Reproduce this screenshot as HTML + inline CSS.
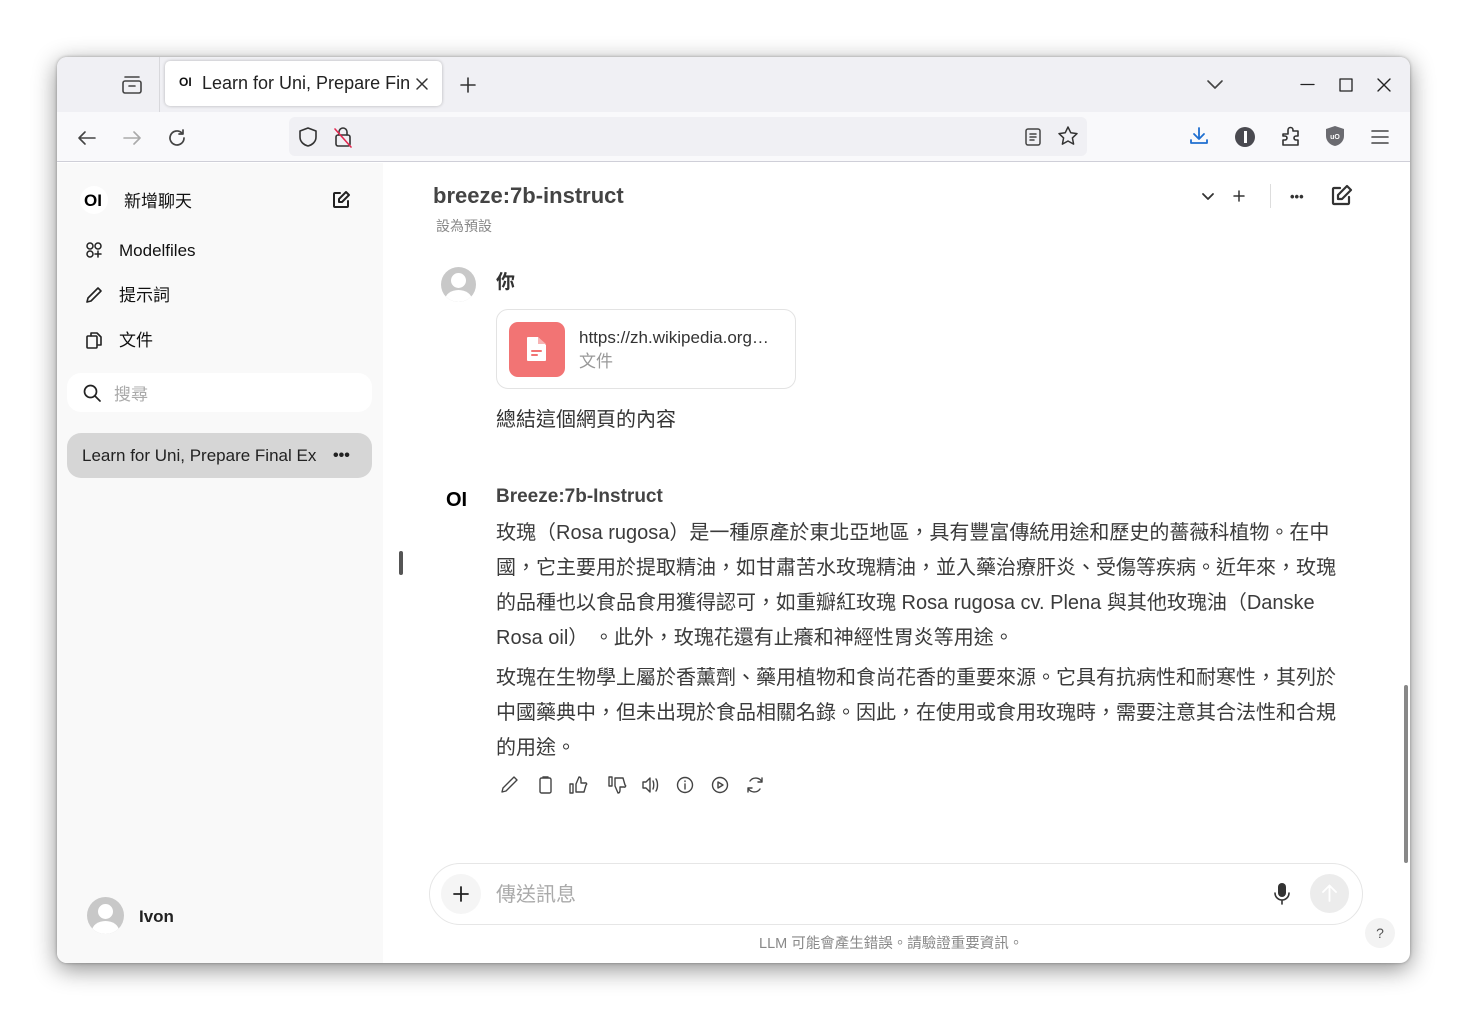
<!DOCTYPE html>
<html><head><meta charset="utf-8"><style>
*{margin:0;padding:0;box-sizing:border-box}
body{width:1465px;height:1018px;background:#fff;font-family:"Liberation Sans","Noto Sans CJK TC",sans-serif;position:relative;overflow:hidden;color:#333}
.a{position:absolute}
#win{left:57px;top:57px;width:1353px;height:906px;border-radius:10px;overflow:hidden;box-shadow:0 6px 24px rgba(0,0,0,.45),0 0 3px rgba(0,0,0,.3);background:#fff}
.t{white-space:nowrap}
svg{position:absolute;fill:none;stroke-linecap:round;stroke-linejoin:round}
.line{font-size:20px;color:#3b3b3b;white-space:nowrap;left:439px}
</style></head><body>
<div id="win" class="a">
 <div class="a" style="left:0;top:0;width:1353px;height:55px;background:#f0f0f4"></div>
 <div class="a" style="left:102px;top:0;width:1px;height:55px;background:#d8d8dc"></div>
 <svg style="left:64px;top:17px" width="22" height="22" viewBox="0 0 22 22" stroke="#444" stroke-width="1.6"><rect x="2" y="7" width="18" height="12" rx="2"/><path d="M4 3h14M8 12h6"/></svg>
 <div class="a" style="left:108px;top:4px;width:277px;height:45px;background:#fff;border-radius:5px;box-shadow:0 0 3px rgba(0,0,0,.25)"></div>
 <div class="a t" style="left:122px;top:18px;font-size:12px;font-weight:bold;color:#111">OI</div>
 <div class="a t" style="left:145px;top:16px;font-size:18px;color:#222;width:208px;overflow:hidden">Learn for Uni, Prepare Fina</div>
 <svg style="left:358px;top:20px" width="14" height="14" viewBox="0 0 14 14" stroke="#333" stroke-width="1.5"><path d="M2 2l10 10M12 2L2 12"/></svg>
 <svg style="left:402px;top:19px" width="18" height="18" viewBox="0 0 18 18" stroke="#333" stroke-width="1.6"><path d="M9 2v14M2 9h14"/></svg>
 <svg style="left:1149px;top:20px" width="18" height="14" viewBox="0 0 18 14" stroke="#444" stroke-width="1.6"><path d="M2 4l7 7 7-7"/></svg>
 <svg style="left:1243px;top:20px" width="16" height="16" viewBox="0 0 16 16" stroke="#222" stroke-width="1.3"><path d="M1 7.5h13"/></svg>
 <svg style="left:1281px;top:20px" width="16" height="16" viewBox="0 0 16 16" stroke="#222" stroke-width="1.3"><rect x="2" y="2" width="12" height="12"/></svg>
 <svg style="left:1319px;top:20px" width="16" height="16" viewBox="0 0 16 16" stroke="#222" stroke-width="1.4"><path d="M2 2l12 12M14 2L2 14"/></svg>
 <div class="a" style="left:0;top:55px;width:1353px;height:50px;background:#f9f9fb;border-bottom:1px solid #cfcfd8"></div>
 <svg style="left:19px;top:70px" width="22" height="22" viewBox="0 0 22 22" stroke="#444" stroke-width="1.6"><path d="M19 11H3M9 5l-6 6 6 6"/></svg>
 <svg style="left:64px;top:70px" width="22" height="22" viewBox="0 0 22 22" stroke="#aaa" stroke-width="1.6"><path d="M3 11h16M13 5l6 6-6 6"/></svg>
 <svg style="left:109px;top:70px" width="22" height="22" viewBox="0 0 22 22" stroke="#444" stroke-width="1.7"><path d="M18 11a7 7 0 1 1-2.5-5.4M17 3v4h-4"/></svg>
 <div class="a" style="left:232px;top:60px;width:798px;height:39px;background:#f0f0f4;border-radius:6px"></div>
 <svg style="left:240px;top:69px" width="22" height="22" viewBox="0 0 22 22" stroke="#333" stroke-width="1.6"><path d="M11 2l8 3v6c0 5-4 8-8 9-4-1-8-4-8-9V5z"/></svg>
 <svg style="left:275px;top:68px" width="22" height="24" viewBox="0 0 22 24" stroke="#333" stroke-width="1.6"><rect x="4" y="10" width="14" height="11" rx="2"/><path d="M7 10V7a4 4 0 0 1 8 0v3"/><path d="M3 4l16 18" stroke="#e22850"/></svg>
 <svg style="left:966px;top:70px" width="20" height="20" viewBox="0 0 20 20" stroke="#444" stroke-width="1.5"><rect x="3" y="2" width="14" height="16" rx="2"/><path d="M7 7h6M7 10h6M7 13h4"/></svg>
 <svg style="left:1000px;top:68px" width="22" height="22" viewBox="0 0 22 22" stroke="#333" stroke-width="1.5"><path d="M11 2l2.8 5.8 6.2.8-4.6 4.3 1.2 6.2L11 16l-5.6 3.1 1.2-6.2L2 8.6l6.2-.8z"/></svg>
 <svg style="left:1131px;top:68px" width="22" height="22" viewBox="0 0 22 22" stroke="#1f6fd0" stroke-width="1.8"><path d="M11 3v11M6 9l5 5 5-5M3 15v3h16v-3"/></svg>
 <div class="a" style="left:1178px;top:70px;width:20px;height:20px;border-radius:50%;background:#4a4a50"></div>
 <div class="a" style="left:1186.5px;top:74px;width:3px;height:12px;background:#fff"></div>
 <svg style="left:1222px;top:67px" width="24" height="24" viewBox="0 0 24 24" stroke="#333" stroke-width="1.6"><path d="M4 10h5V6a2.5 2.5 0 0 1 5 0v1h5v5h-2a2 2 0 0 0 0 4h2v5H4v-5h2a2 2 0 0 0 0-4H4z"/></svg>
 <svg style="left:1267px;top:68px" width="22" height="22" viewBox="0 0 22 22"><path d="M11 1l9 3v7c0 5-4 9-9 10-5-1-9-5-9-10V4z" fill="#6b6b70"/><text x="11" y="14" font-size="7" fill="#fff" text-anchor="middle" font-family="Liberation Sans" font-weight="bold">uO</text></svg>
 <svg style="left:1312px;top:69px" width="22" height="22" viewBox="0 0 22 22" stroke="#444" stroke-width="1.6"><path d="M3 5h16M3 11h16M3 17h16"/></svg>

 <div class="a" style="left:0;top:106px;width:326px;height:800px;background:#f9f9f9"></div>
 <div class="a" style="left:23px;top:129px;width:28px;height:28px;border-radius:50%;background:#fff"></div>
 <div class="a t" style="left:27px;top:134px;font-size:17px;font-weight:bold;color:#000">OI</div>
 <div class="a t" style="left:67px;top:130px;font-size:17px;color:#111">新增聊天</div>
 <svg style="left:274px;top:133px" width="20" height="20" viewBox="0 0 20 20" stroke="#222" stroke-width="2"><path d="M9 3H4a1 1 0 0 0-1 1v12a1 1 0 0 0 1 1h12a1 1 0 0 0 1-1v-5"/><path d="M15 2l3 3-7 7H8V9z"/></svg>
 <svg style="left:28px;top:184px" width="18" height="18" viewBox="0 0 18 18" stroke="#222" stroke-width="1.5"><circle cx="5" cy="5" r="3"/><circle cx="13" cy="5" r="3"/><circle cx="5" cy="13" r="3"/><path d="M13 10v6M10 13h6"/></svg>
 <div class="a t" style="left:62px;top:184px;font-size:17px;color:#111">Modelfiles</div>
 <svg style="left:27px;top:228px" width="20" height="20" viewBox="0 0 20 20" stroke="#222" stroke-width="1.6"><path d="M14 3l3 3L7 16l-4 1 1-4z"/></svg>
 <div class="a t" style="left:62px;top:224px;font-size:17px;color:#111">提示詞</div>
 <svg style="left:27px;top:273px" width="20" height="20" viewBox="0 0 20 20" stroke="#222" stroke-width="1.6"><path d="M7 6V3h6l4 4v8h-3"/><rect x="3" y="6" width="10" height="12" rx="1"/></svg>
 <div class="a t" style="left:62px;top:269px;font-size:17px;color:#111">文件</div>
 <div class="a" style="left:10px;top:316px;width:305px;height:39px;background:#fff;border-radius:14px"></div>
 <svg style="left:25px;top:326px" width="20" height="20" viewBox="0 0 20 20" stroke="#222" stroke-width="1.7"><circle cx="8.5" cy="8.5" r="6"/><path d="M13 13l5 5"/></svg>
 <div class="a t" style="left:57px;top:323px;font-size:17px;color:#aaa">搜尋</div>
 <div class="a" style="left:10px;top:376px;width:305px;height:45px;background:#d6d6d6;border-radius:14px"></div>
 <div class="a t" style="left:25px;top:389px;font-size:17px;color:#222;width:236px;overflow:hidden">Learn for Uni, Prepare Final Ex</div>
 <div class="a t" style="left:276px;top:390px;font-size:16px;font-weight:bold;color:#222">•••</div>
 <div class="a" style="left:30px;top:840px;width:37px;height:37px;border-radius:50%;background:#c8c8c8;overflow:hidden"><div class="a" style="left:11px;top:7px;width:15px;height:15px;border-radius:50%;background:#fff"></div><div class="a" style="left:5px;top:24px;width:27px;height:20px;border-radius:50%;background:#fff"></div></div>
 <div class="a t" style="left:82px;top:850px;font-size:17px;font-weight:bold;color:#222">Ivon</div>

 <div class="a" style="left:342px;top:494px;width:4px;height:24px;border-radius:2px;background:#555"></div>
 <div class="a t" style="left:376px;top:126px;font-size:22px;font-weight:bold;color:#444">breeze:7b-instruct</div>
 <div class="a t" style="left:379px;top:159px;font-size:14px;color:#888">設為預設</div>
 <svg style="left:1143px;top:131px" width="16" height="16" viewBox="0 0 16 16" stroke="#333" stroke-width="1.8"><path d="M3 6l5 5 5-5"/></svg>
 <svg style="left:1174px;top:131px" width="16" height="16" viewBox="0 0 16 16" stroke="#333" stroke-width="1.5"><path d="M8 3v10M3 8h10"/></svg>
 <div class="a" style="left:1213px;top:127px;width:1px;height:24px;background:#ddd"></div>
 <div class="a t" style="left:1233px;top:132px;font-size:13px;font-weight:bold;color:#333">•••</div>
 <svg style="left:1272px;top:127px" width="24" height="24" viewBox="0 0 24 24" stroke="#333" stroke-width="2.2"><path d="M11 4H5a1 1 0 0 0-1 1v14a1 1 0 0 0 1 1h14a1 1 0 0 0 1-1v-6"/><path d="M18 2l4 4-9 9H9v-4z"/></svg>

 <div class="a" style="left:384px;top:210px;width:35px;height:35px;border-radius:50%;background:#c8c8c8;overflow:hidden"><div class="a" style="left:10px;top:6px;width:15px;height:15px;border-radius:50%;background:#fff"></div><div class="a" style="left:4px;top:23px;width:27px;height:20px;border-radius:50%;background:#fff"></div></div>
 <div class="a t" style="left:439px;top:210px;font-size:19px;font-weight:bold;color:#333">你</div>
 <div class="a" style="left:439px;top:252px;width:300px;height:80px;border:1px solid #e3e3e3;border-radius:12px"></div>
 <div class="a" style="left:452px;top:265px;width:56px;height:55px;border-radius:9px;background:#f27474"></div>
 <svg style="left:468px;top:278px" width="24" height="28" viewBox="0 0 24 28"><path d="M3 2h10l8 8v15a1 1 0 0 1-1 1H3a1 1 0 0 1-1-1V3a1 1 0 0 1 1-1z" fill="#fff"/><path d="M13 2v7h8" fill="#f7b3b3"/><path d="M7 16h9M7 20h5" stroke="#f27474" stroke-width="2"/></svg>
 <div class="a t" style="left:522px;top:271px;font-size:17px;color:#333">https://zh.wikipedia.org…</div>
 <div class="a t" style="left:522px;top:290px;font-size:17px;color:#999">文件</div>
 <div class="a t" style="left:439px;top:346px;font-size:20px;color:#333">總結這個網頁的內容</div>

 <div class="a t" style="left:389px;top:432px;font-size:20px;font-weight:bold;color:#000">OI</div>
 <div class="a t" style="left:439px;top:429px;font-size:19px;font-weight:bold;color:#444">Breeze:7b-Instruct</div>
 <div class="a line" style="top:459px">玫瑰（Rosa rugosa）是一種原產於東北亞地區，具有豐富傳統用途和歷史的薔薇科植物。在中</div>
 <div class="a line" style="top:494px">國，它主要用於提取精油，如甘肅苦水玫瑰精油，並入藥治療肝炎、受傷等疾病。近年來，玫瑰</div>
 <div class="a line" style="top:529px">的品種也以食品食用獲得認可，如重瓣紅玫瑰 Rosa rugosa cv. Plena 與其他玫瑰油（Danske</div>
 <div class="a line" style="top:564px">Rosa oil）&nbsp;。此外，玫瑰花還有止癢和神經性胃炎等用途。</div>
 <div class="a line" style="top:604px">玫瑰在生物學上屬於香薰劑、藥用植物和食尚花香的重要來源。它具有抗病性和耐寒性，其列於</div>
 <div class="a line" style="top:639px">中國藥典中，但未出現於食品相關名錄。因此，在使用或食用玫瑰時，需要注意其合法性和合規</div>
 <div class="a line" style="top:674px">的用途。</div>

 <svg style="left:443px;top:718px" width="330" height="20" viewBox="0 0 330 20" stroke="#444" stroke-width="1.4">
  <path d="M14 2l3 3-11 11-4 1 1-4z"/>
  <rect x="40" y="3" width="11" height="15" rx="1.5"/><path d="M43 2h5"/>
  <path d="M73 9v9h-3V9zM76 9l3-7c2 0 2 2 2 3v3h4a1 1 0 0 1 1 2l-2 7H76z"/>
  <path d="M112 11V2h-3v9zM115 11l3 7c2 0 2-2 2-3v-3h4a1 1 0 0 0 1-2l-2-7h-8z"/>
  <path d="M143 7h3l4-4v14l-4-4h-3zM153 6c1 2 1 6 0 8M156 4c2 3 2 9 0 12"/>
  <circle cx="185" cy="10" r="7.5"/><path d="M185 9v5M185 6v.5"/>
  <circle cx="220" cy="10" r="7.5"/><path d="M218 7v6l5-3z"/>
  <path d="M262 7a7 7 0 0 0-12-1M248 13a7 7 0 0 0 12 1M262 3v4h-4M248 17v-4h4"/>
 </svg>

 <div class="a" style="left:372px;top:806px;width:934px;height:62px;border:1px solid #e6e6e6;border-radius:31px;background:#fff"></div>
 <div class="a" style="left:384px;top:817px;width:40px;height:40px;border-radius:50%;background:#f5f5f5"></div>
 <svg style="left:395px;top:828px" width="18" height="18" viewBox="0 0 18 18" stroke="#222" stroke-width="1.8"><path d="M9 2v14M2 9h14"/></svg>
 <div class="a t" style="left:439px;top:821px;font-size:20px;color:#aaa">傳送訊息</div>
 <svg style="left:1214px;top:824px" width="22" height="26" viewBox="0 0 22 26"><rect x="7" y="2" width="8" height="14" rx="4" fill="#333"/><path d="M4 12a7 7 0 0 0 14 0M11 19v4" stroke="#333" stroke-width="1.6" fill="none"/></svg>
 <div class="a" style="left:1253px;top:817px;width:39px;height:39px;border-radius:50%;background:#ececec"></div>
 <svg style="left:1262px;top:826px" width="21" height="21" viewBox="0 0 21 21" stroke="#fff" stroke-width="1.8"><path d="M10.5 18V3M4 9l6.5-6.5L17 9"/></svg>
 <div class="a t" style="left:702px;top:875px;font-size:14.5px;color:#888">LLM 可能會產生錯誤。請驗證重要資訊。</div>
 <div class="a" style="left:1308px;top:861px;width:30px;height:30px;border-radius:50%;background:#f3f3f3;font-size:14px;color:#555;text-align:center;line-height:30px">?</div>
 <div class="a" style="left:1347px;top:628px;width:4px;height:178px;border-radius:2px;background:#888"></div>
</div>
</body></html>
